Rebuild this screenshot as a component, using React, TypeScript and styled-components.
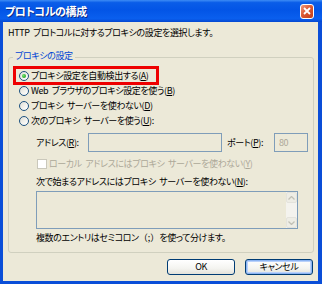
import styled, { createGlobalStyle } from "styled-components";

const GlobalStyle = createGlobalStyle`
  html, body {
    margin: 0;
    padding: 0;
    background: #ffffff;
  }
  body {
    font-family: "Noto Sans CJK JP", "Liberation Sans", sans-serif;
    font-size: 9px;
    line-height: 12px;
    letter-spacing: -0.4px;
    word-spacing: 2px;
    font-feature-settings: "palt" 1;
    color: #000000;
    white-space: nowrap;
  }
`;

// window chrome

const Window = styled.div`
  width: 322px;
  height: 284px;
  display: flex;
  flex-direction: column;
`;

const TitleBar = styled.div`
  height: 22px;
  flex: none;
  display: flex;
  align-items: center;
  justify-content: space-between;
  padding: 0 8px 0 5px;
  box-sizing: border-box;
  background: linear-gradient(
    to bottom,
    #3d8cf5 0%,
    #0a5de8 12%,
    #0355e6 45%,
    #0a5fee 85%,
    #0447d0 100%
  );
`;

const Title = styled.span`
  color: #ffffff;
  font-weight: bold;
  font-size: 11px;
  text-shadow: 1px 1px 0 #0a2a88;
`;

const CloseButton = styled.div`
  width: 14px;
  height: 15px;
  box-sizing: border-box;
  border: 1px solid #ffffff;
  border-radius: 3px;
  background: linear-gradient(135deg, #f09a7e 0%, #dc5a34 45%, #c23d18 100%);
  display: flex;
  align-items: center;
  justify-content: center;
`;

const Frame = styled.div`
  flex: 1;
  display: flex;
  border-style: solid;
  border-color: #0a4ed8;
  border-width: 0 4px 3px 3px;
`;

const Body = styled.div`
  flex: 1;
  display: flex;
  flex-direction: column;
  background: #ece9d8;
  padding: 5px 4px 0 5px;
`;

const Intro = styled.p`
  margin: 0;
  height: 12px;
  flex: none;
`;

// group box

const Group = styled.fieldset`
  flex: none;
  margin: 11px 0 0 0;
  padding: 3px 5px 8px 6px;
  border: 1px solid #d0d0bf;
  border-radius: 3px;
  min-width: 0;
`;

const Legend = styled.legend`
  color: #0046d5;
  padding: 0 2px 3px;
  margin-left: -2px;
  line-height: 12px;
`;

const OptionRow = styled.div<{ $marked?: boolean }>`
  display: flex;
  align-items: center;
  gap: 2px;
  height: 15px;
  padding: 0 ${(p) => (p.$marked ? 8 : 3)}px 0 4px;
  width: ${(p) => (p.$marked ? "fit-content" : "auto")};
  outline: ${(p) => (p.$marked ? "3px solid #ee0000" : "none")};
  outline-offset: -1px;
`;

const Radio = styled.span<{ $checked?: boolean }>`
  position: relative;
  width: 10px;
  height: 10px;
  flex: none;
  box-sizing: border-box;
  border-radius: 50%;
  border: 1px solid #1c5180;
  background: linear-gradient(135deg, #dcdcd4 0%, #f4f4f0 60%, #ffffff 100%);

  &::after {
    content: "";
    display: ${(p) => (p.$checked ? "block" : "none")};
    position: absolute;
    left: 2px;
    top: 2px;
    width: 4px;
    height: 4px;
    border-radius: 50%;
    background: radial-gradient(circle at 35% 35%, #6fe36f 0%, #21a121 80%);
  }
`;

const SubRow = styled.div<{ $top: number }>`
  display: flex;
  align-items: center;
  margin-top: ${(p) => p.$top}px;
  padding-left: 21px;
`;

const FieldLabel = styled.span<{ $width: number; $indent?: number }>`
  width: ${(p) => p.$width}px;
  padding-left: ${(p) => p.$indent ?? 0}px;
  box-sizing: border-box;
  flex: none;
`;

const TextInput = styled.div<{ $width: number }>`
  width: ${(p) => p.$width}px;
  height: 19px;
  flex: none;
  box-sizing: border-box;
  border: 1px solid #7f9db9;
  background: #ece9d8;
  color: #aca899;
  padding-left: 4px;
  display: flex;
  align-items: center;
`;

const CheckRow = styled.div`
  display: flex;
  align-items: center;
  gap: 2px;
  height: 13px;
  margin-top: 5px;
  padding-left: 22px;
  color: #aca899;
`;

const CheckBox = styled.span`
  width: 10px;
  height: 10px;
  flex: none;
  box-sizing: border-box;
  border: 1px solid #cac8bb;
  background: #ffffff;
`;

const ListBox = styled.div`
  margin: 3px 0 0 21px;
  width: 262px;
  height: 38px;
  box-sizing: border-box;
  border: 1px solid #7f9db9;
  background: #ece9d8;
  display: flex;
  justify-content: flex-end;
`;

const ScrollBar = styled.div`
  width: 11px;
  display: flex;
  flex-direction: column;
  justify-content: space-between;
  background: #f4f3ee;
`;

const ScrollButton = styled.div`
  height: 11px;
  box-sizing: border-box;
  border: 1px solid #e4e3dc;
  border-radius: 2px;
  background: #eeede5;
  display: flex;
  align-items: center;
  justify-content: center;
`;

const Note = styled.p`
  margin: 3px 0 0 21px;
  height: 12px;
`;

const WidePunct = styled.span`
  font-feature-settings: normal;
  letter-spacing: 0;
`;

// buttons

const ButtonRow = styled.div`
  flex: none;
  display: flex;
  justify-content: flex-end;
  gap: 10px;
  margin: 6px 1px 0 0;
`;

const PushButton = styled.button<{ $focused?: boolean }>`
  width: 68px;
  height: 16px;
  padding: 0;
  font: inherit;
  font-size: 9px;
  line-height: 12px;
  letter-spacing: inherit;
  color: #000000;
  border: 1px solid #003c74;
  border-radius: 3px;
  background: linear-gradient(to bottom, #ffffff 0%, #f4f4f0 60%, #e3e2da 100%);
  box-shadow: ${(p) =>
    p.$focused ? "inset 0 0 0 1px #8cb4f2, inset 0 0 0 2px #b9d1fa" : "none"};
`;

const Key = styled.u`
  text-decoration-thickness: 1px;
  text-underline-offset: 1px;
`;

function Chevron({ up }: { up?: boolean }) {
  return (
    <svg width="7" height="4" viewBox="0 0 7 4">
      <path
        d={up ? "M0.5 3.5 L3.5 0.5 L6.5 3.5" : "M0.5 0.5 L3.5 3.5 L6.5 0.5"}
        fill="none"
        stroke="#c2c1b6"
        strokeWidth="1.3"
      />
    </svg>
  );
}

export default function App() {
  return (
    <>
      <GlobalStyle />
      <Window>
        <TitleBar>
          <Title>プロトコルの構成</Title>
          <CloseButton>
            <svg width="8" height="8" viewBox="0 0 8 8">
              <path d="M1 1 L7 7 M7 1 L1 7" stroke="#ffffff" strokeWidth="1.8" />
            </svg>
          </CloseButton>
        </TitleBar>
        <Frame>
          <Body>
            <Intro>HTTP プロトコルに対するプロキシの設定を選択します。</Intro>
            <Group>
              <Legend>プロキシの設定</Legend>
              <OptionRow $marked>
                <Radio $checked />
                <span>
                  プロキシ設定を自動検出する(<Key>A</Key>)
                </span>
              </OptionRow>
              <OptionRow>
                <Radio />
                <span>
                  Web ブラウザのプロキシ設定を使う(<Key>B</Key>)
                </span>
              </OptionRow>
              <OptionRow>
                <Radio />
                <span>
                  プロキシ サーバーを使わない(<Key>D</Key>)
                </span>
              </OptionRow>
              <OptionRow>
                <Radio />
                <span>
                  次のプロキシ サーバーを使う(<Key>U</Key>):
                </span>
              </OptionRow>
              <SubRow $top={5}>
                <FieldLabel $width={52}>
                  アドレス(<Key>R</Key>):
                </FieldLabel>
                <TextInput $width={134} />
                <FieldLabel $width={52} $indent={5}>
                  ポート(<Key>P</Key>):
                </FieldLabel>
                <TextInput $width={34}>80</TextInput>
              </SubRow>
              <CheckRow>
                <CheckBox />
                <span>
                  ローカル アドレスにはプロキシ サーバーを使わない(<Key>Y</Key>)
                </span>
              </CheckRow>
              <SubRow $top={6}>
                <span>
                  次で始まるアドレスにはプロキシ サーバーを使わない(<Key>N</Key>):
                </span>
              </SubRow>
              <ListBox>
                <ScrollBar>
                  <ScrollButton>
                    <Chevron up />
                  </ScrollButton>
                  <ScrollButton>
                    <Chevron />
                  </ScrollButton>
                </ScrollBar>
              </ListBox>
              <Note>
                複数のエントリはセミコロン<WidePunct>（;）</WidePunct>を使って分けます。
              </Note>
            </Group>
            <ButtonRow>
              <PushButton>OK</PushButton>
              <PushButton $focused>キャンセル</PushButton>
            </ButtonRow>
          </Body>
        </Frame>
      </Window>
    </>
  );
}
